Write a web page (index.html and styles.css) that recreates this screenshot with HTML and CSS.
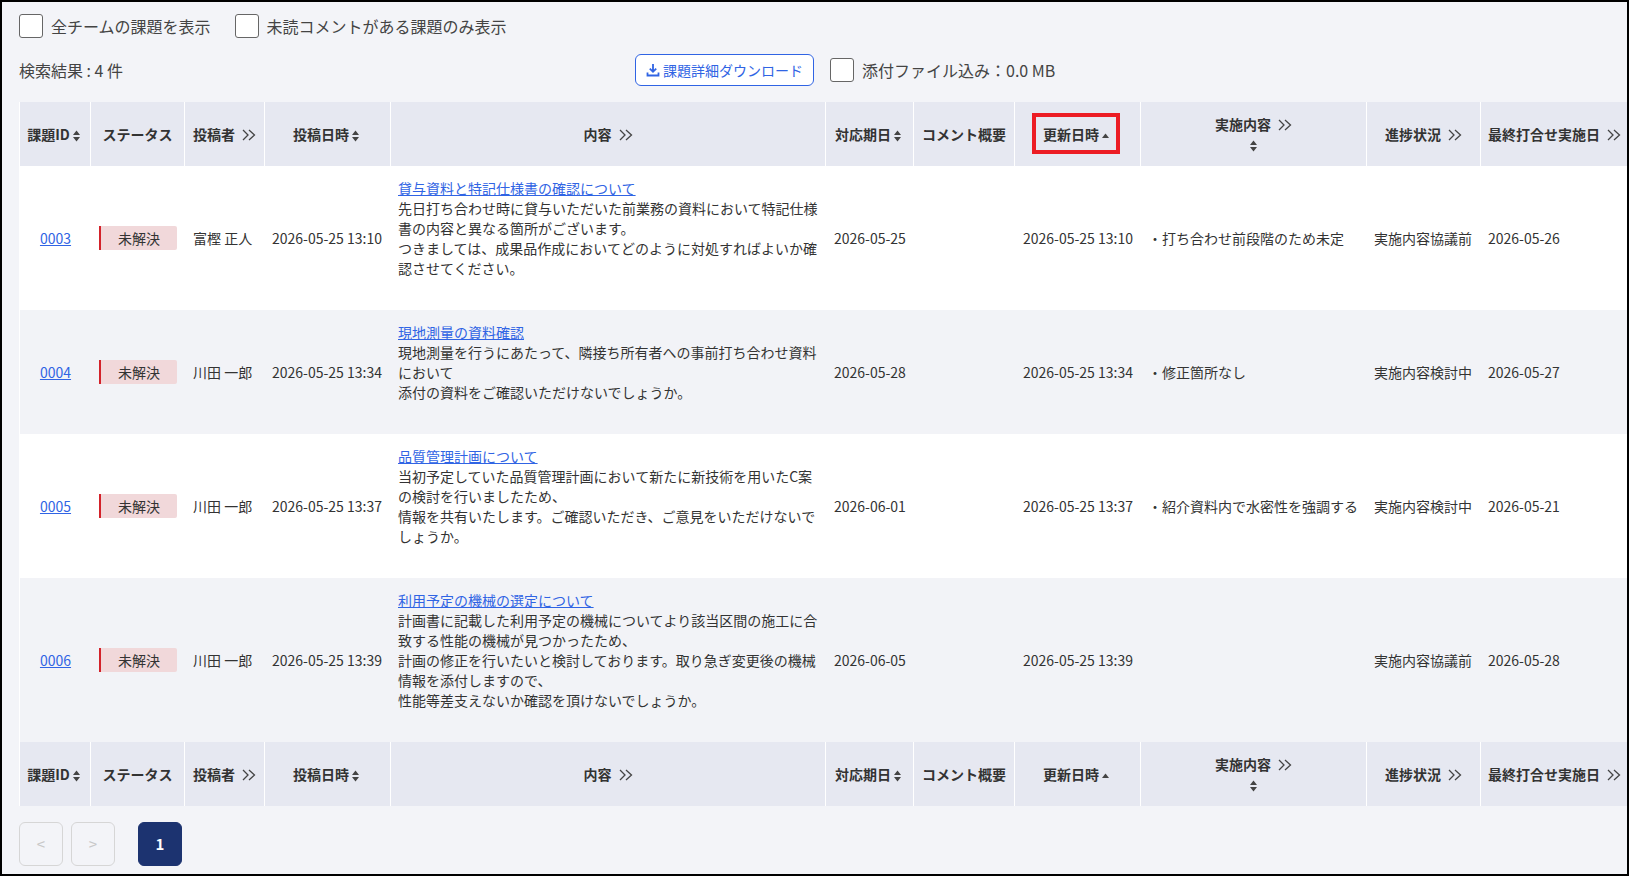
FILE: index.html
```html
<!DOCTYPE html>
<html lang="ja">
<head>
    <meta charset="UTF-8">
    <meta name="viewport" content="width=device-width, initial-scale=1.0">
    <title>課題一覧</title>
    <link rel="stylesheet" href="styles.css">
</head>
<body>
    <svg class="defs" aria-hidden="true">
        <symbol id="sort" viewBox="0 0 7 12"><path d="M3.500 .5 7 5H0zM3.500 11.500 0 7h7z"/></symbol>
        <symbol id="sort-asc" viewBox="0 0 7 12"><path d="M3.500 3.500 7 8H0z"/></symbol>
        <symbol id="expand" viewBox="0 0 14 12"><path d="M1 1l5 5-5 5M7 1l5.500 5-5.500 5"/></symbol>
    </svg>

    <div class="page">
        <div class="filter-row">
            <label class="check"><span class="box"></span>全チームの課題を表示</label>
            <label class="check"><span class="box"></span>未読コメントがある課題のみ表示</label>
        </div>

        <div class="result-row">
            <div class="result-count">検索結果 : 4 件</div>
            <button class="download-btn" type="button">
                <svg class="download-icon" viewBox="0 0 14 14"><path d="M7 1v7.500M3.800 5.600 7 8.800l3.200-3.200M1.500 9.500v3h11v-3"/></svg>
                課題詳細ダウンロード
            </button>
            <label class="check"><span class="box"></span>添付ファイル込み：0.0 MB</label>
        </div>

        <table class="issues">
            <colgroup>
                <col class="c-id"><col class="c-status"><col class="c-author"><col class="c-posted">
                <col class="c-body"><col class="c-due"><col class="c-comment"><col class="c-updated">
                <col class="c-action"><col class="c-progress"><col class="c-meeting">
            </colgroup>
            <thead>
                <tr>
                    <th>課題ID<svg class="sort"><use href="#sort"/></svg></th>
                    <th>ステータス</th>
                    <th>投稿者<svg class="expand"><use href="#expand"/></svg></th>
                    <th>投稿日時<svg class="sort"><use href="#sort"/></svg></th>
                    <th>内容<svg class="expand"><use href="#expand"/></svg></th>
                    <th>対応期日<svg class="sort"><use href="#sort"/></svg></th>
                    <th>コメント概要</th>
                    <th class="marked">更新日時<svg class="sort"><use href="#sort-asc"/></svg><span class="red-box"></span></th>
                    <th class="two-line">実施内容<svg class="expand"><use href="#expand"/></svg><svg class="sort sort-below"><use href="#sort"/></svg></th>
                    <th>進捗状況<svg class="expand"><use href="#expand"/></svg></th>
                    <th>最終打合せ実施日<svg class="expand"><use href="#expand"/></svg></th>
                </tr>
            </thead>
            <tbody>
                <tr>
                    <td class="id"><a href="#">0003</a></td>
                    <td><span class="badge">未解決</span></td>
                    <td>富樫 正人</td>
                    <td>2026-05-25 13:10</td>
                    <td class="body-cell">
                        <div class="issue-text">
                            <a href="#">貸与資料と特記仕様書の確認について</a><br>
                            先日打ち合わせ時に貸与いただいた前業務の資料において特記仕様書の内容と異なる箇所がございます。<br>
                            つきましては、成果品作成においてどのように対処すればよいか確認させてください。
                        </div>
                    </td>
                    <td>2026-05-25</td>
                    <td></td>
                    <td>2026-05-25 13:10</td>
                    <td>・打ち合わせ前段階のため未定</td>
                    <td>実施内容協議前</td>
                    <td>2026-05-26</td>
                </tr>
                <tr>
                    <td class="id"><a href="#">0004</a></td>
                    <td><span class="badge">未解決</span></td>
                    <td>川田 一郎</td>
                    <td>2026-05-25 13:34</td>
                    <td class="body-cell">
                        <div class="issue-text">
                            <a href="#">現地測量の資料確認</a><br>
                            現地測量を行うにあたって、隣接ち所有者への事前打ち合わせ資料において<br>
                            添付の資料をご確認いただけないでしょうか。
                        </div>
                    </td>
                    <td>2026-05-28</td>
                    <td></td>
                    <td>2026-05-25 13:34</td>
                    <td>・修正箇所なし</td>
                    <td>実施内容検討中</td>
                    <td>2026-05-27</td>
                </tr>
                <tr>
                    <td class="id"><a href="#">0005</a></td>
                    <td><span class="badge">未解決</span></td>
                    <td>川田 一郎</td>
                    <td>2026-05-25 13:37</td>
                    <td class="body-cell">
                        <div class="issue-text">
                            <a href="#">品質管理計画について</a><br>
                            当初予定していた品質管理計画において新たに新技術を用いたC案の検討を行いましたため、<br>
                            情報を共有いたします。ご確認いただき、ご意見をいただけないでしょうか。
                        </div>
                    </td>
                    <td>2026-06-01</td>
                    <td></td>
                    <td>2026-05-25 13:37</td>
                    <td>・紹介資料内で水密性を強調する</td>
                    <td>実施内容検討中</td>
                    <td>2026-05-21</td>
                </tr>
                <tr>
                    <td class="id"><a href="#">0006</a></td>
                    <td><span class="badge">未解決</span></td>
                    <td>川田 一郎</td>
                    <td>2026-05-25 13:39</td>
                    <td class="body-cell">
                        <div class="issue-text">
                            <a href="#">利用予定の機械の選定について</a><br>
                            計画書に記載した利用予定の機械についてより該当区間の施工に合致する性能の機械が見つかったため、<br>
                            計画の修正を行いたいと検討しております。取り急ぎ変更後の機械情報を添付しますので、<br>
                            性能等差支えないか確認を頂けないでしょうか。
                        </div>
                    </td>
                    <td>2026-06-05</td>
                    <td></td>
                    <td>2026-05-25 13:39</td>
                    <td></td>
                    <td>実施内容協議前</td>
                    <td>2026-05-28</td>
                </tr>
            </tbody>
            <tfoot>
                <tr>
                    <th>課題ID<svg class="sort"><use href="#sort"/></svg></th>
                    <th>ステータス</th>
                    <th>投稿者<svg class="expand"><use href="#expand"/></svg></th>
                    <th>投稿日時<svg class="sort"><use href="#sort"/></svg></th>
                    <th>内容<svg class="expand"><use href="#expand"/></svg></th>
                    <th>対応期日<svg class="sort"><use href="#sort"/></svg></th>
                    <th>コメント概要</th>
                    <th>更新日時<svg class="sort"><use href="#sort-asc"/></svg></th>
                    <th class="two-line">実施内容<svg class="expand"><use href="#expand"/></svg><svg class="sort sort-below"><use href="#sort"/></svg></th>
                    <th>進捗状況<svg class="expand"><use href="#expand"/></svg></th>
                    <th>最終打合せ実施日<svg class="expand"><use href="#expand"/></svg></th>
                </tr>
            </tfoot>
        </table>

        <div class="pager">
            <button class="page-btn" type="button" disabled>&lt;</button>
            <button class="page-btn" type="button" disabled>&gt;</button>
            <button class="page-btn current" type="button">1</button>
        </div>
    </div>
</body>
</html>
```

FILE: styles.css
```css
:root {
    --page-bg: #f3f4f8;
    --head-bg: #e6e8f1;
    --text: #333333;
    --link: #3064e4;
}

* {
    box-sizing: border-box;
}

body {
    margin: 0;
    font-family: "Noto Sans CJK JP", "Noto Sans", sans-serif;
    font-size: 14px;
    line-height: 20px;
    color: var(--text);
}

.defs {
    display: none;
}

.page {
    width: 1629px;
    height: 876px;
    padding: 12px 0 0 17px;
    border: 2px solid #000000;
    background: var(--page-bg);
    overflow: hidden;
}

.filter-row {
    display: flex;
    gap: 24px;
    height: 24px;
}

.check {
    display: flex;
    align-items: center;
    gap: 8px;
    font-size: 16px;
    color: #444444;
}

.box {
    width: 24px;
    height: 24px;
    background: #ffffff;
    border: 1px solid #666666;
    border-radius: 3px;
}

.result-row {
    display: flex;
    align-items: center;
    gap: 16px;
    height: 32px;
    margin: 16px 0;
}

.result-count {
    width: 600px;
    font-size: 16px;
    color: #444444;
}

.download-btn {
    display: flex;
    align-items: center;
    gap: 3px;
    width: 179px;
    height: 32px;
    padding: 0 0 0 10px;
    background: #ffffff;
    border: 1px solid var(--link);
    border-radius: 6px;
    color: var(--link);
    font: inherit;
}

.download-icon {
    width: 14px;
    height: 14px;
    fill: none;
    stroke: var(--link);
    stroke-width: 1.8;
}

.issues {
    width: 1610px;
    table-layout: fixed;
    border-collapse: separate;
    border-spacing: 0;
    background: #ffffff;
    border-left: 1px solid #ffffff;
}

.c-id { width: 71px; }
.c-status { width: 94px; }
.c-author { width: 80px; }
.c-posted { width: 126px; }
.c-body { width: 435px; }
.c-due { width: 88px; }
.c-comment { width: 101px; }
.c-updated { width: 126px; }
.c-action { width: 226px; }
.c-progress { width: 114px; }
.c-meeting { width: 148px; }

th {
    height: 64px;
    padding: 0 4px;
    background: var(--head-bg);
    border-right: 1px solid #ffffff;
    font-weight: 700;
    text-align: center;
    vertical-align: middle;
    white-space: nowrap;
}

th.two-line {
    padding-bottom: 2px;
}

td {
    padding: 12px 8px;
    vertical-align: middle;
    white-space: nowrap;
}

/* posted date, action, progress and meeting columns sit 1px tighter */
td:nth-child(4),
td:nth-child(9),
td:nth-child(10),
td:nth-child(11) {
    padding-left: 7px;
}

tbody tr:nth-child(even) td {
    background: #f2f3f7;
}

td.id {
    text-align: center;
}

td.body-cell {
    padding: 12px 5px 12px 7px;
    white-space: normal;
}

/* the body text leaves one empty line under it */
.issue-text {
    margin-bottom: 20px;
}

a {
    color: var(--link);
}

.badge {
    display: block;
    height: 24px;
    line-height: 24px;
    background: #f1d8da;
    border-left: 2px solid #d3222a;
    border-radius: 0 2px 2px 0;
    text-align: center;
}

.sort {
    width: 7px;
    height: 12px;
    margin: 0 3px;
    vertical-align: -2px;
    fill: #444444;
}

.sort-below {
    display: block;
    margin: 6px auto 0;
}

.expand {
    width: 14px;
    height: 12px;
    margin-left: 7px;
    vertical-align: -1px;
    fill: none;
    stroke: #444444;
    stroke-width: 1.3;
}

.marked {
    position: relative;
}

.red-box {
    position: absolute;
    top: 11px;
    left: 17px;
    width: 88px;
    height: 41px;
    border: 4px solid #ec1c24;
}

.pager {
    display: flex;
    gap: 8px;
    margin-top: 16px;
}

.page-btn {
    width: 44px;
    height: 44px;
    padding: 0;
    background: transparent;
    border: 1px solid #d6d6d6;
    border-radius: 6px;
    color: #c8c8c8;
    font: inherit;
    font-size: 15px;
}

.page-btn.current {
    margin-left: 15px;
    background: #1c3370;
    border-color: #1c3370;
    color: #ffffff;
    font-weight: 700;
}
```
